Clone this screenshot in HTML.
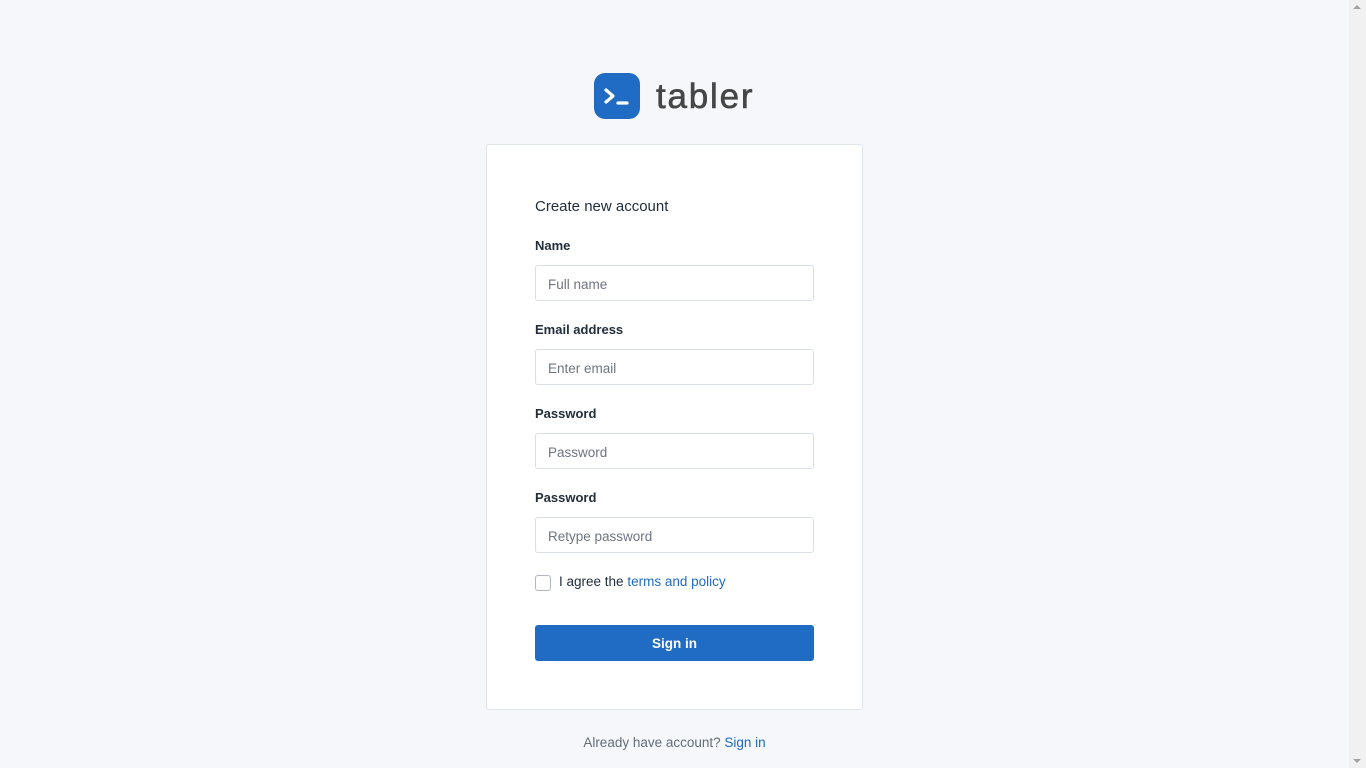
<!DOCTYPE html>
<html><head><meta charset="utf-8"><style>
*{box-sizing:border-box;margin:0;padding:0}
html,body{width:1366px;height:768px;overflow:hidden}
body{background:#f5f7fb;font-family:"Liberation Sans",sans-serif;color:#232e3c;position:relative}
.sb{position:absolute;left:1349px;top:0;width:17px;height:768px;background:#f1f1f1}
.sb:before{content:"";position:absolute;left:4px;top:5px;border:4px solid transparent;border-bottom:4px solid #a3a3a3;border-top:0}
.sb:after{content:"";position:absolute;left:4px;bottom:5px;border:4px solid transparent;border-top:4px solid #a3a3a3;border-bottom:0}
.logo{position:absolute;left:594px;top:73px;width:46px;height:46px;background:#206bc4;border-radius:11px}
.brand{position:absolute;left:656px;top:75px;font-size:35px;color:#464646;letter-spacing:1.8px;line-height:44px;-webkit-text-stroke:0.6px #464646}
.card{position:absolute;left:486px;top:144px;width:377px;height:566px;background:#fff;border:1px solid #e0e5ec;border-radius:3px}
.abs{position:absolute}
.title{left:48px;top:53px;font-size:15px;color:#232e3c}
.lbl{left:48px;font-size:13px;font-weight:bold;color:#232e3c}
.inp{left:48px;width:279px;height:36px;border:1px solid #dadfe5;border-radius:3px;font-size:13.5px;color:#6e7582;padding:11px 12px 0;line-height:16px}
.cb{left:48px;top:430px;width:16px;height:16px;border:1px solid #b0b6bf;border-radius:3px}
.agree{left:72px;top:429px;font-size:13.5px;color:#232e3c}
.agree span{color:#206bc4}
.btn{left:48px;top:480px;width:279px;height:36px;background:#206bc4;border-radius:3px;color:#fff;font-weight:bold;font-size:13.5px;text-align:center;line-height:37px}
.foot{position:absolute;left:0;width:1349px;top:735px;text-align:center;font-size:13.5px;color:#656d77}
.foot span{color:#206bc4}
</style></head><body>
<div class="logo"><svg width="46" height="46" viewBox="0 0 46 46"><path d="M12 17l7 6-7 6" fill="none" stroke="#fff" stroke-width="3.2" stroke-linecap="round" stroke-linejoin="round"/><path d="M24 30h9" stroke="#fff" stroke-width="3.2" stroke-linecap="round"/></svg></div>
<div class="brand">tabler</div>
<div class="card">
<div class="abs title">Create new account</div>
<div class="abs lbl" style="top:93px">Name</div>
<div class="abs inp" style="top:120px">Full name</div>
<div class="abs lbl" style="top:177px">Email address</div>
<div class="abs inp" style="top:204px">Enter email</div>
<div class="abs lbl" style="top:261px">Password</div>
<div class="abs inp" style="top:288px">Password</div>
<div class="abs lbl" style="top:345px">Password</div>
<div class="abs inp" style="top:372px">Retype password</div>
<div class="abs cb"></div>
<div class="abs agree">I agree the <span>terms and policy</span></div>
<div class="abs btn">Sign in</div>
</div>
<div class="foot">Already have account? <span>Sign in</span></div>
<div class="sb"></div>
</body></html>
